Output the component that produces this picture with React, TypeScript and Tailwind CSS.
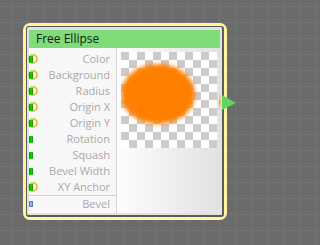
import React from "react";

interface IInput {
  name: string;
  ring: boolean;
}

const inputs: IInput[] = [
  { name: "Color", ring: true },
  { name: "Background", ring: true },
  { name: "Radius", ring: true },
  { name: "Origin X", ring: true },
  { name: "Origin Y", ring: true },
  { name: "Rotation", ring: false },
  { name: "Squash", ring: false },
  { name: "Bevel Width", ring: false },
  { name: "XY Anchor", ring: true },
];

const Port: React.FC<{ ring: boolean }> = ({ ring }) => (
  <span
    className={
      ring
        ? "ml-[-1px] flex h-[10px] w-[10px] shrink-0 items-center rounded-full border-2 border-[#f0c040]"
        : "ml-[-1px] flex h-[10px] w-[10px] shrink-0 items-center border-2 border-transparent"
    }
  >
    <span className="ml-[-1px] h-[7px] w-[4px] shrink-0 rounded-[1px] border-x border-[#0b9a0b] bg-[#00d400]" />
  </span>
);

const Row: React.FC<{ input: IInput }> = ({ input }) => (
  <div className="flex h-[16px] items-center">
    <Port ring={input.ring} />
    <span className="flex-1 pr-[6px] text-right text-[11px] leading-[16px] text-[#a8a8a8]">
      {input.name}
    </span>
  </div>
);

const Preview: React.FC = () => (
  <svg width="96" height="96" viewBox="0 0 96 96">
    <defs>
      <pattern id="checker" width="16" height="16" patternUnits="userSpaceOnUse">
        <rect width="16" height="16" fill="#ffffff" />
        <rect width="8" height="8" fill="#cbcbcb" />
        <rect x="8" y="8" width="8" height="8" fill="#cbcbcb" />
      </pattern>
      <filter id="soft" x="-20%" y="-20%" width="140%" height="140%">
        <feGaussianBlur stdDeviation="2.2" />
      </filter>
    </defs>
    <rect width="96" height="96" fill="url(#checker)" />
    <ellipse cx="37" cy="42" rx="37" ry="30" fill="#ff8000" filter="url(#soft)" />
  </svg>
);

export default function App() {
  return (
    <div
      className="h-[245px] w-full min-w-[252px] bg-[#6b6b6b] bg-[linear-gradient(to_right,#747474_1px,transparent_1px),linear-gradient(to_bottom,#747474_1px,transparent_1px)] bg-[size:16px_16px] bg-[position:11px_6px] pl-[23px] pt-[23px]"
      style={{ fontFamily: '"Open Sans", "Noto Sans", sans-serif' }}
    >
      <div className="relative h-[197px] w-[204px] rounded-[7px] border-[3px] border-[#fff5a0]">
        <div className="flex h-full flex-col rounded-[3px] border-b-2 border-l border-r-2 border-t border-[#5c5c5c] bg-[#e2e2e2] px-[2px] pb-[2px] pt-[3px]">
          <div className="h-[18px] bg-[#80dc78] pl-[7px] text-[12px] leading-[18px] text-[#142014]">
            Free Ellipse
          </div>
          <div className="flex flex-1">
            <div className="flex w-[87px] flex-col bg-[#f8f8f8] pt-[3px]">
              {inputs.map((input) => (
                <Row key={input.name} input={input} />
              ))}
              <div className="h-px bg-[#d2d2d2]" />
              <div className="flex h-[16px] items-center">
                <span className="ml-[-1px] flex h-[10px] w-[10px] shrink-0 items-center border-2 border-transparent">
                  <span className="ml-[-1px] h-[6px] w-[4px] shrink-0 border border-[#5a7ad0] bg-[#8fb0f0]" />
                </span>
                <span className="flex-1 pr-[6px] text-right text-[11px] leading-[16px] text-[#a8a8a8]">
                  Bevel
                </span>
              </div>
            </div>
            <div className="w-px bg-[#d4d4d4]" />
            <div className="flex-1 bg-[linear-gradient(to_right,#fdfdfd,#e2e2e2)] pl-[4px] pt-[4px]">
              <Preview />
            </div>
          </div>
        </div>
        <svg
          width="19"
          height="20"
          viewBox="0 0 19 20"
          className="absolute left-[192px] top-[66px]"
        >
          <defs>
            <linearGradient id="glow" x1="0" y1="0" x2="0" y2="1">
              <stop offset="0" stopColor="#ffb000" stopOpacity="0" />
              <stop offset="0.5" stopColor="#ff9a00" />
              <stop offset="1" stopColor="#ffd000" stopOpacity="0.2" />
            </linearGradient>
          </defs>
          <rect x="1" y="1" width="1.5" height="18" fill="url(#glow)" />
          <polygon points="4,3 18,11 4,18" fill="#5ed65e" />
        </svg>
      </div>
    </div>
  );
}
